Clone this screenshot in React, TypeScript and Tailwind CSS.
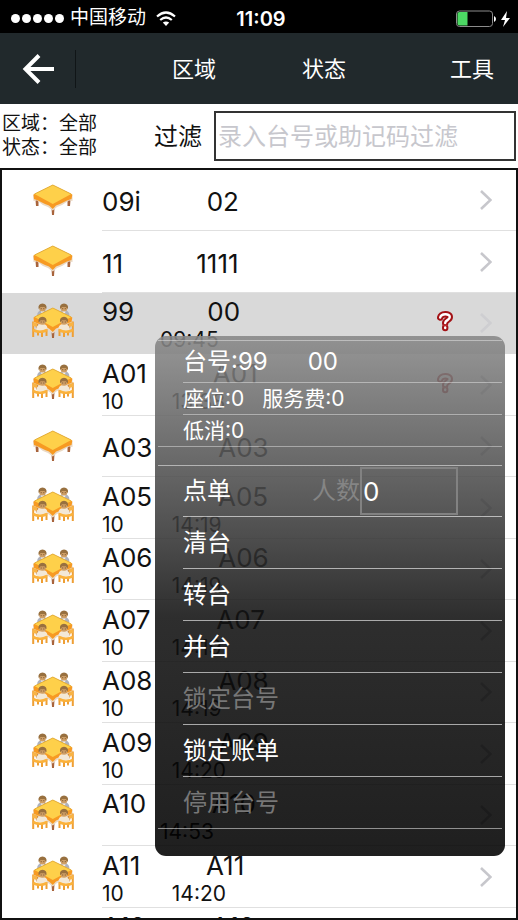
import React from 'react';

type TableRow = {
  code: string;
  name: string;
  seats?: string;
  time?: string;
  alert?: boolean;
  selected?: boolean;
};

const tables: TableRow[] = [
  { code: '09i', name: '02' },
  { code: '11', name: '1111' },
  { code: '99', name: '00', time: '09:45', alert: true, selected: true },
  { code: 'A01', name: 'A01', seats: '10', time: '13:38', alert: true },
  { code: 'A03', name: 'A03' },
  { code: 'A05', name: 'A05', seats: '10', time: '14:19' },
  { code: 'A06', name: 'A06', seats: '10', time: '14:19' },
  { code: 'A07', name: 'A07', seats: '10', time: '14:19' },
  { code: 'A08', name: 'A08', seats: '10', time: '14:19' },
  { code: 'A09', name: 'A09', seats: '10', time: '14:20' },
  { code: 'A10', name: 'A10', time: '14:53' },
  { code: 'A11', name: 'A11', seats: '10', time: '14:20' },
  { code: 'A12', name: 'A12', seats: '10', time: '14:20' },
];

const actions = [
  { label: '清台', disabled: false },
  { label: '转台', disabled: false },
  { label: '并台', disabled: false },
  { label: '锁定台号', disabled: true },
  { label: '锁定账单', disabled: false },
  { label: '停用台号', disabled: true },
];

const GuestHead: React.FC<{ x: number; y: number }> = ({ x, y }) => (
  <g transform={`translate(${x} ${y})`}>
    <ellipse cx="0" cy="0.5" rx="3.400" ry="3.500" fill="#cf9f66" />
    <path d="M-4 1.200Q-4.600 -3.800 0 -4Q4.600 -3.800 4 1.200L2.800 0.800L2 -0.600H-2L-2.800 0.800Z" fill="#98703f" />
    <path d="M-1.800 1.200H-0.800M0.800 1.200H1.800" stroke="#6f4c2a" strokeWidth="0.900" />
  </g>
);

const TableIcon: React.FC<{ occupied: boolean }> = ({ occupied }) => (
  <svg className="-mt-1.5 h-9 w-[42px]" viewBox="0 0 42 36" aria-hidden="true">
    {occupied && (
      <>
        <path d="M5 12.500Q5.500 7 10.500 7Q15.500 7 16 12L10 14.500Z" fill="#aeb2bd" />
        <path d="M37.500 12.500Q37 7 32 7Q27 7 26.500 12L32 14.500Z" fill="#aeb2bd" />
        <path d="M9 8H12L11.500 10.500H9.500ZM30.500 8H33.500L33 10.500H31Z" fill="#ececf0" />
        <GuestHead x={10.500} y={4.500} />
        <GuestHead x={32} y={4.500} />
      </>
    )}
    <path d="M3.500 20h3v6h-2.500zM19.500 28h3l-.5 7h-2zM35.500 20h3l-.5 6h-2.500z" fill="#a8643c" />
    <path d="M1 15L4 13.500L20.800 22L37.500 13.500L40.500 15L40.500 21L37 20.500L30 25L25 27L20.800 30.500L16 27L11 25L5 20.500L1.500 21Z" fill="#ead9c4" />
    <path d="M1.500 14.500L20.800 5L40.300 14.500L39.500 19L35 20.500L28 24L24 25.500L20.800 29L17 25.500L13 24L6 20.500L2 19Z" fill="#f79a22" />
    <path d="M2.500 14L20.800 5L39.200 14L20.800 24Z" fill="#fed04a" />
    <path d="M2.500 14L20.800 5L39.200 14" fill="none" stroke="#e0ab3a" strokeWidth="0.900" />
    {occupied && (
      <>
        <path d="M1.200 18.500V34M6 28V32.500M10 28V34M14.500 26V33" stroke="#ee9f35" strokeWidth="2" fill="none" />
        <path d="M40.800 18.500V34M36 28V32.500M32 28V34M27.500 26V33" stroke="#ee9f35" strokeWidth="2" fill="none" />
        <path d="M1 19L5.500 20.500V24L1 23ZM41 19L36.500 20.500V24L41 23Z" fill="#f9b445" />
        <path d="M4 25.500Q5 21 10.500 21Q14.800 21 15.500 25L13.500 27.500H5.500Z" fill="#f3e8d6" />
        <path d="M38 25.500Q37 21 31.500 21Q27.200 21 26.500 25L28.500 27.500H36.500Z" fill="#f3e8d6" />
        <path d="M1 27Q8 30.500 15 27M41 27Q34 30.500 27 27" stroke="#fbb23c" strokeWidth="2.600" fill="none" />
        <GuestHead x={10.500} y={17.800} />
        <GuestHead x={32} y={17.800} />
      </>
    )}
  </svg>
);

const AlertIcon = () => (
  <svg className="-mt-1 h-[22px] w-[18px]" viewBox="0 0 18 22" fill="none" strokeLinecap="round" strokeLinejoin="round" aria-hidden="true">
    <g stroke="#a31216" strokeWidth="6.400">
      <path d="M4.200 7.500C5 3.500 13.800 3 13.800 7C13.800 10.200 9.200 10 9.200 13" />
      <path d="M9.200 17.500V18" />
    </g>
    <g stroke="#ffffff" strokeWidth="2.400">
      <path d="M4.200 7.500C5 3.500 13.800 3 13.800 7C13.800 10.200 9.200 10 9.200 13" />
      <path d="M9.200 17.500V18" />
    </g>
    <path d="M7 15.200H11.400" stroke="#c4373a" strokeWidth="1" />
  </svg>
);

const Chevron = () => (
  <svg className="h-5 w-3" viewBox="0 0 12 20" fill="none" aria-hidden="true">
    <path d="M1 1L10.500 10L1 19" stroke="#c7c7cc" strokeWidth="2.600" />
  </svg>
);

const StatusBar = () => (
  <div className="relative flex h-[33px] shrink-0 items-center bg-black pt-1 pr-2 pl-[11px] text-white">
    <div className="flex gap-0.5">
      {[0, 1, 2, 3, 4].map((dot) => (
        <span key={dot} className="size-[9px] rounded-full bg-white" />
      ))}
    </div>
    <span className="ml-1.5 text-[19px]">中国移动</span>
    <svg className="ml-2.5 h-4 w-5" viewBox="0 0 20 16" fill="none" stroke="#fff" strokeWidth="2.200" aria-hidden="true">
      <path d="M1 5.500Q10 -2.500 19 5.500" />
      <path d="M4.200 9Q10 4 15.800 9" />
      <path d="M10 15L6.800 11.600Q10 9.200 13.200 11.600Z" fill="#fff" stroke="none" />
    </svg>
    <span className="absolute left-1/2 -translate-x-1/2 pl-1 text-xl font-semibold">11:09</span>
    <svg className="ml-auto h-[18px] w-[54px]" viewBox="0 0 54 18" aria-hidden="true">
      <rect x="0.500" y="1" width="36" height="15.500" rx="3" fill="none" stroke="#8b8b8b" />
      <path d="M1.500 4Q1.500 2 3.500 2H11.500V15.500H3.500Q1.500 15.500 1.500 13.500Z" fill="#4cd964" />
      <path d="M38 6Q40 7 40 9Q40 11 38 12Z" fill="#fff" />
      <path d="M51 1L45 10H49L47 17L54 8H50Z" fill="#fff" />
    </svg>
  </div>
);

const NavBar = () => (
  <header className="flex h-[71px] shrink-0 items-center bg-[#21292c] pr-6 text-[22px] text-white">
    <button type="button" aria-label="返回" className="flex h-[38px] w-[76px] items-center border-r border-[#101517] pl-[22px]">
      <svg className="h-[30px] w-8" viewBox="0 0 32 30" fill="none" stroke="#fff" strokeWidth="4" aria-hidden="true">
        <path d="M17 1.500L3.500 15L17 28.500M3 15H32" />
      </svg>
    </button>
    <button type="button" className="ml-24 pt-0.5">区域</button>
    <button type="button" className="ml-[86px] pt-0.5">状态</button>
    <button type="button" className="ml-auto pt-0.5">工具</button>
  </header>
);

const FilterBar = () => (
  <div className="flex h-16 shrink-0 items-center pr-0.5 pl-0.5">
    <div className="text-[19px] leading-6">
      <p>区域：全部</p>
      <p>状态：全部</p>
    </div>
    <label htmlFor="filter" className="ml-[57px] pt-0.5 text-2xl">过滤</label>
    <input
      id="filter"
      type="text"
      placeholder="录入台号或助记码过滤"
      className="ml-3 h-[50px] min-w-0 flex-1 border-2 border-[#333] px-0.5 text-2xl placeholder:text-[#c7c7cd]"
    />
  </div>
);

const TableItem: React.FC<{ row: TableRow }> = ({ row }) => (
  <li className={`flex h-[61px] even:h-[62px] ${row.selected ? 'bg-[#d9d9d9]' : ''}`}>
    <div className="flex w-[100px] shrink-0 items-center pl-[30px]">
      <TableIcon occupied={Boolean(row.time)} />
    </div>
    <div className={`flex flex-1 items-center border-b pr-6 ${row.selected ? 'border-transparent' : 'border-[#e0e0e0]'}`}>
      <div className={`flex-1 ${row.time ? 'pt-0.5' : 'pt-1'}`}>
        <p className="text-[26px] leading-8 whitespace-pre">{row.code.padEnd(12) + row.name}</p>
        {row.time && (
          <p className="flex text-[21px] leading-6">
            <span className="mr-12 min-w-2.5">{row.seats}</span>
            <span>{row.time}</span>
          </p>
        )}
      </div>
      {row.alert && <AlertIcon />}
      <div className={`ml-[26px] ${row.selected ? 'opacity-60' : ''}`}>
        <Chevron />
      </div>
    </div>
  </li>
);

const ActionPanel = () => (
  <section className="absolute top-[336px] right-[13px] w-[350px] rounded-[11px] bg-[linear-gradient(to_bottom,rgba(136,136,136,0.88),rgba(50,50,50,0.88)_40%,rgba(17,17,17,0.88)_54%,rgba(0,0,0,0.88))] px-[3px] pt-1 pb-[27px] text-white">
    <div className="border-y border-white/40 pl-[25px]">
      <h2 className="flex h-[42px] items-center gap-10 border-b border-white/40 text-2xl">
        <span>台号:99</span>
        <span>00</span>
      </h2>
      <p className="flex h-8 items-center gap-[18px] border-b border-white/40 text-[21px]">
        <span>座位:0</span>
        <span>服务费:0</span>
      </p>
      <p className="flex h-[31px] items-center text-[21px]">低消:0</p>
    </div>
    <div className="mt-[18px] border-y border-white/50 pl-[25px] text-2xl">
      <div className="flex h-[51px] items-center border-b border-white/60">
        <button type="button">点单</button>
        <label htmlFor="guests" className="ml-auto text-[#858585]">人数</label>
        <input
          id="guests"
          type="text"
          defaultValue="0"
          className="mr-11 h-12 w-[98px] border-2 border-[#828282] px-px text-[26px]"
        />
      </div>
      {actions.map((action) => (
        <button
          key={action.label}
          type="button"
          disabled={action.disabled}
          className="block h-[52px] w-full border-b border-white/60 text-left last:h-[51px] last:border-b-0 disabled:text-[#777]"
        >
          {action.label}
        </button>
      ))}
    </div>
  </section>
);

export default function App() {
  return (
    <div className="relative flex h-screen flex-col overflow-hidden bg-white font-['Inter','Noto_Sans_CJK_SC',sans-serif] text-[#111]">
      <StatusBar />
      <NavBar />
      <FilterBar />
      <main className="min-h-0 flex-1 overflow-hidden border-2 border-[#111]">
        <ul>
          {tables.map((row) => (
            <TableItem key={row.code} row={row} />
          ))}
        </ul>
      </main>
      <ActionPanel />
    </div>
  );
}
